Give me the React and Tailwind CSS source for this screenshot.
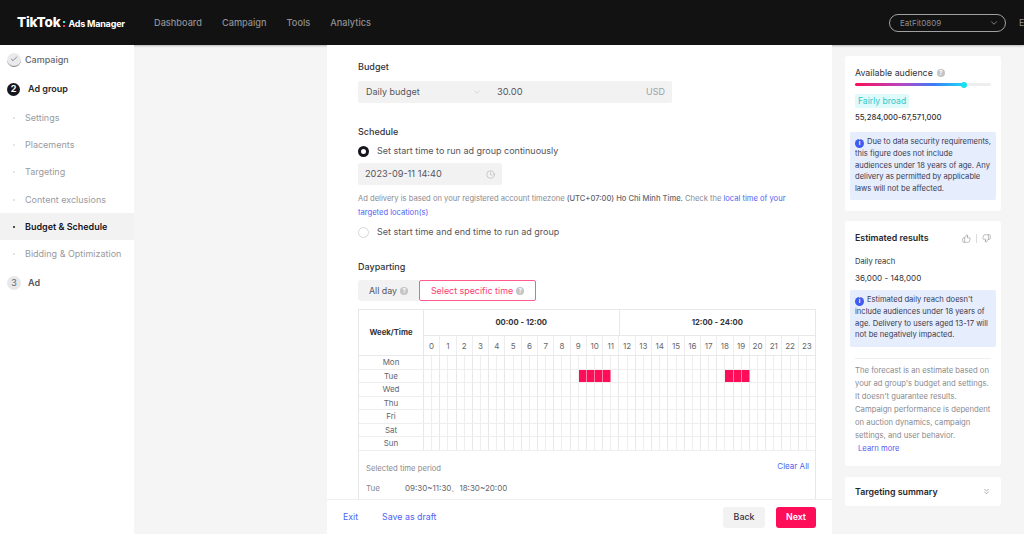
import React from "react";
import { ChevronDown, ChevronsDown, Clock, ThumbsUp, ThumbsDown, Check } from "lucide-react";

const Help = ({ c = "" }) => (
  <span className={"inline-flex w-[8px] h-[8px] rounded-full bg-[#c4c4c6] text-white text-[6px] leading-none items-center justify-center font-bold " + c}>?</span>
);

const Info = () => (
  <span className="inline-flex align-[-1px] w-[9px] h-[9px] mr-[3px] rounded-full bg-[#3d5cf0] text-white text-[6px] leading-none items-center justify-center font-bold">i</span>
);

const SideItem = ({ label, active }) => (
  <div className={"h-[27.3px] flex items-center pl-[13px] gap-[10px] text-[9px] " + (active ? "bg-[#f2f2f3] text-[#16161e] font-semibold" : "text-[#9a9a9e]")}>
    <span className={"w-[2px] h-[2px] rounded-full " + (active ? "bg-[#16161e]" : "bg-[#dcdcdc]")} />
    <span>{label}</span>
  </div>
);

const isOn = (h) => (h >= 19 && h < 23) || (h >= 37 && h < 40);
const days = ["Mon", "Tue", "Wed", "Thu", "Fri", "Sat", "Sun"];
const hours = Array.from({ length: 24 }, (_, i) => i);
const halves = Array.from({ length: 48 }, (_, i) => i);

function Schedule() {
  return (
    <div className="border border-[#e8e8ea] text-[#55555c]">
      <div className="grid grid-cols-[65px_minmax(0,1fr)] border-b border-[#e8e8ea]">
        <div className="flex items-center justify-center border-r border-[#e8e8ea] text-[7.7px] font-bold text-[#33333a] h-[45px]">Week/Time</div>
        <div className="flex flex-col h-[45px]">
          <div className="grid grid-cols-2 h-[26px] border-b border-[#e8e8ea] text-[7.7px] font-bold text-[#33333a]">
            <div className="flex items-center justify-center border-r border-[#e8e8ea]">00:00 - 12:00</div>
            <div className="flex items-center justify-center">12:00 - 24:00</div>
          </div>
          <div className="grid grid-cols-[repeat(24,minmax(0,1fr))] flex-1">
            {hours.map((h) => (
              <div key={h} className="flex items-center justify-center border-r border-[#ededef] last:border-r-0 text-[8px] text-[#66666c]">{h}</div>
            ))}
          </div>
        </div>
      </div>
      {days.map((d, r) => (
        <div key={d} className="grid grid-cols-[65px_minmax(0,1fr)] h-[13.5px] border-b border-[#eeeeef]">
          <div className="flex items-center justify-center border-r border-[#e8e8ea] text-[8px] text-[#66666c]">{d}</div>
          <div className="grid grid-cols-[repeat(48,minmax(0,1fr))]">
            {halves.map((h) => (
              <div key={h} className={"border-r last:border-r-0 " + (r === 1 && isOn(h) ? "bg-[#fe0e58] border-[#ff7fa5]" : h % 2 ? "border-[#e8e8ea]" : "border-[#eeeeef]")} />
            ))}
          </div>
        </div>
      ))}
      <div className="px-[7px] pt-[9px] h-[60px]">
        <div className="flex justify-between items-start">
          <span className="text-[7.7px] text-[#8a8a90] mt-[3px]">Selected time period</span>
          <span className="text-[8px] text-[#4e63f5] mr-[-1px]">Clear All</span>
        </div>
        <div className="flex mt-[8px] text-[8px]">
          <span className="w-[39px] text-[#8a8a90]">Tue</span>
          <span className="text-[#66666c]">09:30~11:30、18:30~20:00</span>
        </div>
      </div>
    </div>
  );
}

export default function App() {
  return (
    <div className="w-[1024px] h-[534px] overflow-hidden flex flex-col bg-[#f5f5f5] font-['Inter','Liberation_Sans',sans-serif]">
      <header className="h-[45px] shrink-0 bg-[#121212] flex items-center text-[#8f8f93] shadow-[0_1px_2px_rgba(0,0,0,0.25)]">
        <div className="flex items-center pl-[17px] w-[154px] text-white">
          <span className="text-[13.5px] font-extrabold tracking-[-0.2px]">TikTok</span>
          <span className="flex flex-col gap-[2px] mx-[3px] mt-[2px]">
            <span className="w-[2px] h-[2px] bg-[#25f4ee]" />
            <span className="w-[2px] h-[2px] bg-[#fe2c55]" />
          </span>
          <span className="text-[9px] font-bold tracking-[-0.2px] mt-[2px]">Ads Manager</span>
        </div>
        <nav className="flex gap-[20px] text-[9.2px] font-medium">
          <span>Dashboard</span>
          <span>Campaign</span>
          <span>Tools</span>
          <span>Analytics</span>
        </nav>
        <div className="ml-auto flex items-center">
          <div className="w-[117px] h-[18px] rounded-full border border-[#a0a0a0] flex items-center justify-between pl-[10px] pr-[6px] text-[8px]">
            <span>EatFit0809</span>
            <ChevronDown size={10} strokeWidth={1.5} className="text-[#c0c0c0]" />
          </div>
          <span className="ml-[13px] w-[5px] overflow-hidden text-[9px]">E</span>
        </div>
      </header>

      <div className="flex-1 flex min-h-0">
        <aside className="w-[134px] shrink-0 bg-white overflow-hidden">
          <div className="h-[29px] flex items-center pl-[7px] gap-[4px]">
            <span className="w-[14px] h-[14px] rounded-full bg-[#eaeaec] border-b border-[#8a8a90] flex items-center justify-center text-[#55555c]">
              <Check size={8} strokeWidth={2} />
            </span>
            <span className="text-[9px] font-medium text-[#66666c]">Campaign</span>
          </div>
          <div className="h-[30px] flex items-center pl-[7px] gap-[8px]">
            <span className="w-[13px] h-[13px] rounded-full bg-[#16161e] text-white text-[9px] font-bold flex items-center justify-center">2</span>
            <span className="text-[9px] font-semibold text-[#26262e]">Ad group</span>
          </div>
          <SideItem label="Settings" />
          <SideItem label="Placements" />
          <SideItem label="Targeting" />
          <SideItem label="Content exclusions" />
          <SideItem label="Budget & Schedule" active />
          <SideItem label="Bidding & Optimization" />
          <div className="h-[30px] flex items-center pl-[7px] gap-[7px]">
            <span className="w-[14px] h-[14px] rounded-full bg-[#e8e8ea] text-[#66666c] text-[9px] flex items-center justify-center">3</span>
            <span className="text-[9px] font-semibold text-[#55555c]">Ad</span>
          </div>
        </aside>

        <div className="w-[193px] shrink-0" />

        <main className="w-[505px] shrink-0 bg-white flex flex-col min-h-0">
          <div className="flex-1 min-h-0 overflow-hidden pl-[31px] pr-[16px] pt-[15px]">
            <div className="mt-[1px] text-[9px] font-medium text-[#33333a] leading-[12px]">Budget</div>
            <div className="mt-[8px] w-[314px] h-[22px] flex bg-[#f2f2f3] rounded-[2px] text-[9px] text-[#55555c] items-center">
              <span className="w-[130px] pl-[8px] flex items-center justify-between pr-[6px]">
                Daily budget
                <ChevronDown size={10} strokeWidth={1} className="text-[#b0b0b4]" />
              </span>
              <span className="pl-[9px] text-[9.3px]">30.00</span>
              <span className="ml-auto pr-[7px] text-[#a0a0a4]">USD</span>
            </div>

            <div className="mt-[23px] text-[9px] font-medium text-[#33333a] leading-[12px]">Schedule</div>
            <div className="mt-[6px] flex items-center gap-[8px] h-[14px] text-[9px] text-[#55555c]">
              <span className="w-[11px] h-[11px] rounded-full border-[3px] border-[#16161e] bg-white" />
              Set start time to run ad group continuously
            </div>
            <div className="mt-[5px] w-[144px] h-[22px] px-[7px] flex items-center justify-between bg-[#f2f2f3] rounded-[2px] text-[9.2px] text-[#55555c]">
              2023-09-11 14:40
              <Clock size={9} strokeWidth={1} className="text-[#8a8a90]" />
            </div>
            <div className="mt-[7px] text-[7.6px] leading-[14px] text-[#8a8a90] whitespace-nowrap">
              <div className="flex gap-[2px]">
                <span>Ad delivery is based on your registered account timezone</span>
                <span className="text-[#66666c] font-medium">(UTC+07:00) Ho Chi Minh Time.</span>
                <span>Check the</span>
                <span className="text-[#4e63f5]">local time of your</span>
              </div>
              <div className="text-[#4e63f5]">targeted location(s)</div>
            </div>
            <div className="mt-[5px] flex items-center gap-[8px] h-[14px] text-[9px] text-[#55555c]">
              <span className="w-[11px] h-[11px] rounded-full border border-[#d8d8da] bg-white" />
              Set start time and end time to run ad group
            </div>

            <div className="mt-[22px] text-[9px] font-medium text-[#33333a] leading-[12px]">Dayparting</div>
            <div className="mt-[7px] flex h-[21px] text-[8.9px]">
              <div className="w-[61px] bg-[#f2f2f3] rounded-l-[3px] flex items-center justify-center gap-[3px] text-[#55555c]">All day <Help /></div>
              <div className="w-[117px] border border-[#ff5c8d] rounded-[2px] flex items-center justify-center gap-[3px] text-[#fe3c72]">Select specific time <Help /></div>
            </div>
            <div className="mt-[8px]">
              <Schedule />
            </div>
          </div>
          <footer className="h-[35px] shrink-0 border-t border-[#eeeeef] flex items-center pl-[16px] pr-[16px] text-[8.8px] text-[#4e63f5]">
            <span>Exit</span>
            <span className="ml-[24px]">Save as draft</span>
            <span className="ml-auto w-[42px] h-[21px] rounded-[3px] bg-[#f2f2f3] text-[#33333a] font-medium flex items-center justify-center">Back</span>
            <span className="ml-[11px] w-[40px] h-[21px] rounded-[3px] bg-[#fe0e58] text-white font-semibold flex items-center justify-center">Next</span>
          </footer>
        </main>

        <aside className="flex-1 pl-[13px] pr-[23px] pt-[11px] flex flex-col gap-[10px] min-w-0">
          <section className="bg-white rounded-[3px] h-[155px] px-[5px] pt-[11px]">
            <div className="px-[5px]">
              <div className="flex items-center gap-[4px] text-[8.8px] text-[#33333a] leading-[12px]">Available audience <Help /></div>
              <div className="relative mt-[4px] h-[3px] rounded-full bg-[#eeeeef]">
                <div className="h-full w-[109px] rounded-full bg-[linear-gradient(90deg,#fe0e58,#b04ac8_45%,#3b7bf5_72%,#1ed8f5)]" />
                <span className="absolute left-[106px] top-[-1.5px] w-[6px] h-[6px] rounded-full bg-[#19e0ee]" />
              </div>
              <span className="mt-[7px] inline-block px-[3px] h-[14px] leading-[14px] rounded-[2px] bg-[#dffafa] text-[#2ec8c8] text-[8.6px]">Fairly broad</span>
              <div className="mt-[2px] text-[7.7px] font-medium text-[#33333a] leading-[12px]">55,284,000-67,571,000</div>
            </div>
            <div className="mt-[8px] bg-[#e6edfd] rounded-[2px] px-[5px] py-[4px] text-[7.6px] leading-[11.8px] text-[#3a3a50] h-[68px] whitespace-nowrap">
              <Info />Due to data security requirements,<br />this figure does not include<br />audiences under 18 years of age. Any<br />delivery as permitted by applicable<br />laws will not be affected.
            </div>
          </section>

          <section className="bg-white rounded-[3px] h-[245px] px-[5px] pt-[11px]">
            <div className="px-[5px] flex items-center justify-between text-[8.8px] font-semibold text-[#26262e] leading-[12px]">
              Estimated results
              <span className="flex items-center gap-[5px] text-[#77777c]">
                <ThumbsUp size={9} strokeWidth={1.2} />
                <span className="w-px h-[9px] bg-[#dcdcde]" />
                <ThumbsDown size={9} strokeWidth={1.2} />
              </span>
            </div>
            <div className="px-[5px] mt-[12px] text-[7.6px] text-[#33333a] leading-[12px]">Daily reach</div>
            <div className="px-[5px] mt-[4px] text-[8.1px] text-[#33333a] leading-[12px]">36,000 - 148,000</div>
            <div className="mt-[6px] bg-[#e6edfd] rounded-[2px] px-[5px] py-[4px] text-[7.6px] leading-[11.8px] text-[#3a3a50] h-[57px]">
              <Info />Estimated daily reach doesn't include audiences under 18 years of age. Delivery to users aged 13-17 will not be negatively impacted.
            </div>
            <div className="mx-[5px] mt-[11px] pt-[5px] border-t border-[#eeeeef] text-[7.7px] leading-[13px] text-[#8a8a90]">
              The forecast is an estimate based on your ad group's budget and settings. It doesn't guarantee results. Campaign performance is dependent on auction dynamics, campaign settings, and user behavior.
              <div className="pl-[3px] text-[#5b5bf5]">Learn more</div>
            </div>
          </section>

          <section className="mt-[1px] bg-white rounded-[3px] h-[29px] px-[10px] flex items-center justify-between text-[8.8px] font-semibold text-[#26262e]">
            Targeting summary
            <ChevronsDown size={9} strokeWidth={1.5} className="text-[#77777c]" />
          </section>
        </aside>
      </div>
    </div>
  );
}
